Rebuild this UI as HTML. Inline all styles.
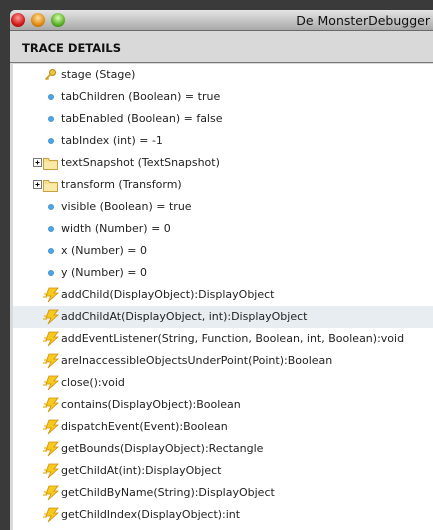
<!DOCTYPE html>
<html><head><meta charset="utf-8"><style>
*{margin:0;padding:0;box-sizing:border-box}
body{width:433px;height:520px;overflow:hidden;background:#3a3a3a;font-family:"DejaVu Sans","Liberation Sans",sans-serif;position:relative}
.win{position:absolute;left:10px;top:10px;width:423px;height:520px;background:#d9d9d9;border-radius:5px 0 0 0;overflow:hidden}
.title{height:21px;background:linear-gradient(#e4e4e4,#a9a9a9);border-bottom:1px solid #6a6a6a;position:relative}
.title .t{position:absolute;right:3px;top:3px;font-size:12.5px;color:#111;font-family:"DejaVu Sans",sans-serif;white-space:nowrap}
.btn{position:absolute;top:3px;width:14px;height:14px;border-radius:50%}
.hdr{height:32px;background:#d9d9d9;border-bottom:1px solid #777;padding:10px 0 0 12px;font-weight:bold;font-size:11.5px;color:#111}
.list{position:absolute;left:3px;top:54px;right:0;bottom:0;background:#fff}
.row{height:22px;position:relative;font-size:11px;color:#222;line-height:22px}
.row span{position:absolute;left:48px;white-space:nowrap}
.sel{background:#e7edf1}
.row svg{position:absolute}
</style></head><body>
<div class="win">
<div class="title">
<div class="btn" style="left:1px;background:radial-gradient(circle at 50% 35%,#ff9a9a,#d01818 60%,#8a0000)"></div>
<div class="btn" style="left:21px;background:radial-gradient(circle at 50% 35%,#ffe0a0,#e08a10 60%,#9a5a00)"></div>
<div class="btn" style="left:41px;background:radial-gradient(circle at 50% 35%,#d8ffb0,#5ab028 60%,#2a6a00)"></div>
<div class="t">De MonsterDebugger</div>
</div>
<div class="hdr">TRACE DETAILS</div>
<div class="list" id="l"></div>
</div>
<script>
const dot='<svg style="left:35px;top:8px" width="6" height="6"><circle cx="3" cy="3" r="2.6" fill="#4aa6e6" stroke="#2a7ab8" stroke-width=".6"/></svg>';
const key='<svg style="left:31px;top:5px" width="12" height="12"><circle cx="8.5" cy="3.5" r="3" fill="#f0c040" stroke="#b88a10"/><path d="M6.5 5.5 L1.5 10.5 M3 9 L4.5 10.5" stroke="#c89a20" stroke-width="1.6"/></svg>';
const fold='<svg style="left:20px;top:4px" width="26" height="14"><rect x=".5" y="2.5" width="8" height="8" fill="#fff" stroke="#777"/><path d="M2.5 6.5h4M4.5 4.5v4" stroke="#000"/><path d="M10.5 2.5h5l1 2h8v9h-14z" fill="#f8e090" stroke="#c8a040"/><rect x="11" y="6" width="13" height="7" fill="#fbe9a8"/></svg>';
const bolt='<svg style="left:30px;top:3px" width="16" height="16"><path d="M6 1h9l-4 5h4L5 15l3-6H3l3-8z" fill="#f6c820" stroke="#d09000" stroke-width=".8"/><path d="M1 7h4M0 10h4" stroke="#f0b010" stroke-width="1.2"/></svg>';
const rows=[[key,'stage (Stage)'],[dot,'tabChildren (Boolean) = true'],[dot,'tabEnabled (Boolean) = false'],[dot,'tabIndex (int) = -1'],[fold,'textSnapshot (TextSnapshot)'],[fold,'transform (Transform)'],[dot,'visible (Boolean) = true'],[dot,'width (Number) = 0'],[dot,'x (Number) = 0'],[dot,'y (Number) = 0'],
[bolt,'addChild(DisplayObject):DisplayObject'],[bolt,'addChildAt(DisplayObject, int):DisplayObject',1],[bolt,'addEventListener(String, Function, Boolean, int, Boolean):void'],[bolt,'areInaccessibleObjectsUnderPoint(Point):Boolean'],[bolt,'close():void'],[bolt,'contains(DisplayObject):Boolean'],[bolt,'dispatchEvent(Event):Boolean'],[bolt,'getBounds(DisplayObject):Rectangle'],[bolt,'getChildAt(int):DisplayObject'],[bolt,'getChildByName(String):DisplayObject'],[bolt,'getChildIndex(DisplayObject):int']];
document.getElementById('l').innerHTML=rows.map(r=>`<div class="row${r[2]?' sel':''}">${r[0]}<span>${r[1]}</span></div>`).join('');
</script>
</body></html>
